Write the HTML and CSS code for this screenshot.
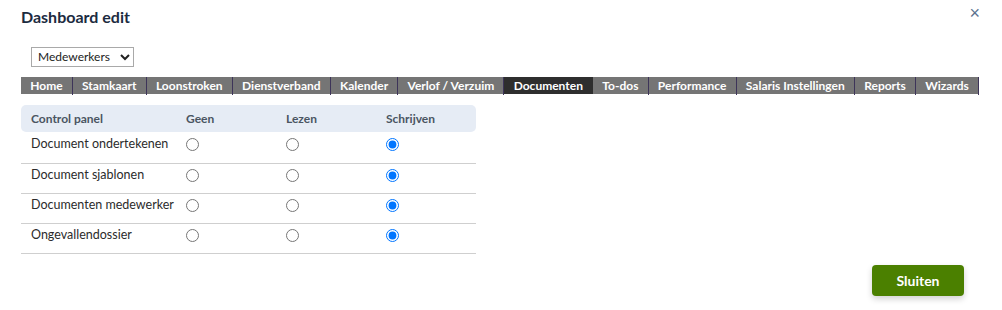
FILE: index.html
```html
<!DOCTYPE html>
<html lang="nl">
<head>
    <meta charset="UTF-8">
    <meta name="viewport" content="width=device-width, initial-scale=1.0">
    <title>Dashboard edit</title>
    <link rel="stylesheet" href="styles.css">
</head>
<body>
    <div class="modal">
        <div class="modal-header">
            <h1>Dashboard edit</h1>
            <button class="close" aria-label="Sluiten">&times;</button>
        </div>

        <div class="select-row">
            <select class="role-select">
                <option>Medewerkers</option>
                <option>Managers</option>
            </select>
        </div>

        <ul class="tabs">
            <li>Home</li>
            <li>Stamkaart</li>
            <li>Loonstroken</li>
            <li>Dienstverband</li>
            <li>Kalender</li>
            <li>Verlof / Verzuim</li>
            <li class="active">Documenten</li>
            <li>To-dos</li>
            <li>Performance</li>
            <li>Salaris Instellingen</li>
            <li>Reports</li>
            <li>Wizards</li>
        </ul>

        <table class="rights">
            <thead>
                <tr>
                    <th>Control panel</th>
                    <th>Geen</th>
                    <th>Lezen</th>
                    <th>Schrijven</th>
                </tr>
            </thead>
            <tbody>
                <tr>
                    <td>Document ondertekenen</td>
                    <td><input type="radio" name="r1"></td>
                    <td><input type="radio" name="r1"></td>
                    <td><input type="radio" name="r1" checked></td>
                </tr>
                <tr>
                    <td>Document sjablonen</td>
                    <td><input type="radio" name="r2"></td>
                    <td><input type="radio" name="r2"></td>
                    <td><input type="radio" name="r2" checked></td>
                </tr>
                <tr>
                    <td>Documenten medewerker</td>
                    <td><input type="radio" name="r3"></td>
                    <td><input type="radio" name="r3"></td>
                    <td><input type="radio" name="r3" checked></td>
                </tr>
                <tr>
                    <td>Ongevallendossier</td>
                    <td><input type="radio" name="r4"></td>
                    <td><input type="radio" name="r4"></td>
                    <td><input type="radio" name="r4" checked></td>
                </tr>
            </tbody>
        </table>

        <div class="modal-footer">
            <button class="btn-close">Sluiten</button>
        </div>
    </div>
</body>
</html>
```

FILE: styles.css
```css
body {
    margin: 0;
    font-family: Lato, "Liberation Sans", sans-serif;
    background-color: #fff;
    color: #222;
}

.modal {
    padding: 6px 23px 14px 21px;
}

.modal-header {
    display: flex;
    justify-content: space-between;
    align-items: flex-start;
}

h1 {
    margin: 1px 0 0;
    font-size: 16px;
    font-weight: 700;
    color: #1c2b3f;
}

.close {
    border: none;
    background: none;
    padding: 0;
    margin-right: -1px;
    font-size: 18px;
    line-height: 14px;
    color: #5d7390;
    cursor: pointer;
}

.select-row {
    padding: 19px 0 0 10px;
}

.role-select {
    width: 103px;
    height: 20px;
    padding: 0 2px;
    border: 1px solid #a9a9a9;
    border-radius: 0;
    background-color: #fff;
    font-family: inherit;
    font-size: 12px;
    color: #222;
}

.tabs {
    display: flex;
    list-style: none;
    margin: 10px 0 0;
    padding: 0;
    width: 958px;
    height: 17px;
    background-color: #757575;
}

.tabs li {
    flex: 1 1 auto;
    padding: 0 8px;
    border-right: 1px solid #3d3459;
    height: 18px;
    font-size: 12px;
    font-weight: 700;
    line-height: 17px;
    color: #fff;
    text-align: center;
    white-space: nowrap;
}

.tabs li.active {
    background-color: #2e2e2e;
    border-right-color: #2e2e2e;
    height: 17px;
}

.rights {
    width: 455px;
    margin-top: 11px;
    border-collapse: collapse;
    table-layout: fixed;
    font-size: 12.5px;
    color: #2b2b2b;
}

.rights th {
    text-align: left;
    padding: 0 10px;
    height: 27px;
    background-color: #e6ecf5;
    font-size: 12px;
    font-weight: 700;
    color: #4a5562;
}

.rights th:first-child {
    width: 135px;
    border-radius: 5px 0 0 5px;
}

.rights th:nth-child(2),
.rights th:nth-child(3) {
    width: 80px;
}

.rights th:last-child {
    border-radius: 0 5px 5px 0;
}

.rights td {
    padding: 0 10px 8px;
    height: 21px;
    border-bottom: 1px solid #cfcfcf;
    white-space: nowrap;
}

.rights tbody tr:first-child td {
    height: 23px;
}

.rights input[type="radio"] {
    margin: 0;
    width: 13px;
    height: 13px;
    vertical-align: middle;
}

.modal-footer {
    display: flex;
    justify-content: flex-end;
    margin-top: 11px;
}

.btn-close {
    width: 92px;
    height: 31px;
    margin-right: 15px;
    border: none;
    border-radius: 4px;
    background-color: #4b8000;
    color: #fff;
    font-family: inherit;
    font-size: 14px;
    font-weight: 700;
    box-shadow: 0 3px 6px rgba(0, 0, 0, 0.18);
    cursor: pointer;
}
```
